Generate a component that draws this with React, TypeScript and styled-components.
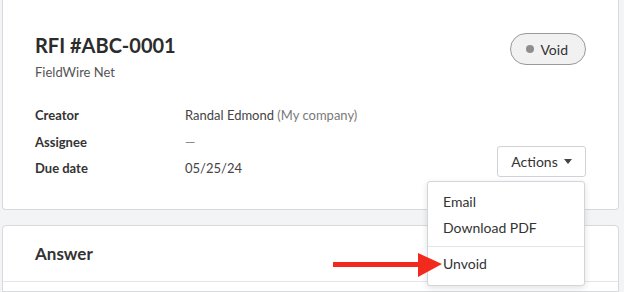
import React from 'react';
import styled, { createGlobalStyle } from 'styled-components';

const GlobalStyle = createGlobalStyle`
  html, body {
    margin: 0;
    padding: 0;
    background: #f3f4f6;
    font-family: Lato, "Open Sans", Arial, sans-serif;
    color: #333;
  }
`;

const Page = styled.div`
  padding: 0 5px 0 2px;
  display: flex;
  flex-direction: column;
  gap: 15px;
  position: relative;
  height: 292px;
  overflow: hidden;
`;

const Card = styled.div`
  background: #fff;
  border: 1px solid #d7d9dc;
  border-top: none;
  border-radius: 0 0 4px 4px;
  padding: 32px 32px 27px 32px;
`;

const AnswerCard = styled.div`
  background: #fff;
  border: 1px solid #d7d9dc;
  border-radius: 4px 4px 0 0;
  flex: 1;
`;

const AnswerHeader = styled.div`
  height: 55px;
  display: flex;
  align-items: center;
  padding: 0 32px;
  border-bottom: 1px solid #e3e5e8;
  font-size: 17px;
  font-weight: 700;
  color: #333;
`;

const Header = styled.div`
  display: flex;
  justify-content: space-between;
  align-items: flex-start;
`;

const Title = styled.h1`
  margin: 0;
  font-size: 20px;
  line-height: 26px;
  font-weight: 700;
  color: #2c2c2c;
`;

const Subtitle = styled.div`
  margin-top: 5px;
  font-size: 13px;
  line-height: 18px;
  color: #555;
`;

const StatusPill = styled.div`
  display: flex;
  align-items: center;
  gap: 6px;
  height: 30px;
  padding: 0 17px 0 15px;
  margin-top: 1px;
  border: 1px solid #9a9a9a;
  border-radius: 16px;
  background: #f1f1f1;
  font-size: 14px;
  color: #333;
`;

const Dot = styled.span`
  width: 8px;
  height: 8px;
  border-radius: 50%;
  background: #8e8e8e;
`;

const Body = styled.div`
  margin-top: 21px;
  display: flex;
  justify-content: space-between;
  align-items: flex-end;
`;

const Details = styled.dl`
  margin: 0;
  display: grid;
  grid-template-columns: 150px auto;
  font-size: 13px;
  line-height: 26.5px;
`;

const Label = styled.dt`
  font-weight: 700;
  color: #333;
`;

const Value = styled.dd<{ muted?: boolean }>`
  margin: 0;
  color: ${p => (p.muted ? '#888' : '#444')};
`;

const Note = styled.span`
  color: #7a7a7a;
`;

const ActionsWrap = styled.div`
  position: relative;
  margin-bottom: 5px;
`;

const ActionsButton = styled.button`
  display: flex;
  align-items: center;
  gap: 6px;
  height: 31px;
  width: 89px;
  justify-content: center;
  border: 1px solid #cfd2d6;
  border-radius: 3px;
  background: #fff;
  font-family: inherit;
  font-size: 14px;
  color: #333;
  padding: 0;
`;

const Caret = styled.span`
  width: 0;
  height: 0;
  border-left: 4px solid transparent;
  border-right: 4px solid transparent;
  border-top: 5px solid #444;
`;

const Menu = styled.div`
  position: absolute;
  top: 35px;
  right: 1px;
  width: 156px;
  background: #fff;
  border: 1px solid #d3d5d9;
  border-radius: 3px;
  box-shadow: 0 2px 6px rgba(0, 0, 0, 0.12);
  padding: 7px 0 8px;
  z-index: 5;
`;

const MenuItem = styled.div`
  padding: 0 15px;
  font-size: 14px;
  line-height: 26px;
  color: #333;
`;

const MenuDivider = styled.div`
  height: 1px;
  background: #e3e5e8;
  margin: 5px 0 4px;
`;

const Arrow = styled.svg`
  position: absolute;
  left: 331px;
  top: 251px;
  z-index: 6;
`;

export default function App() {
  return (
    <>
      <GlobalStyle />
      <Page>
        <Card>
          <Header>
            <div>
              <Title>RFI #ABC-0001</Title>
              <Subtitle>FieldWire Net</Subtitle>
            </div>
            <StatusPill>
              <Dot />
              Void
            </StatusPill>
          </Header>
          <Body>
            <Details>
              <Label>Creator</Label>
              <Value>
                Randal Edmond <Note>(My company)</Note>
              </Value>
              <Label>Assignee</Label>
              <Value muted>—</Value>
              <Label>Due date</Label>
              <Value>05/25/24</Value>
            </Details>
            <ActionsWrap>
              <ActionsButton>
                Actions <Caret />
              </ActionsButton>
              <Menu>
                <MenuItem>Email</MenuItem>
                <MenuItem>Download PDF</MenuItem>
                <MenuDivider />
                <MenuItem>Unvoid</MenuItem>
              </Menu>
            </ActionsWrap>
          </Body>
        </Card>
        <AnswerCard>
          <AnswerHeader>Answer</AnswerHeader>
        </AnswerCard>
        <Arrow width="114" height="28" viewBox="0 0 114 28">
          <path d="M2 11 L87 11 L87 2 L111 13 L87 26 L87 16 L2 16 Z" fill="#f2291d" />
        </Arrow>
      </Page>
    </>
  );
}
